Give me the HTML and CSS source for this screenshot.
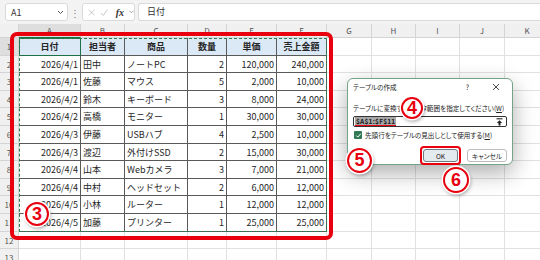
FILE: index.html
```html
<!DOCTYPE html>
<html lang="ja">
<head>
    <meta charset="UTF-8">
    <title>テーブルの作成</title>
    <link rel="stylesheet" href="styles.css">
</head>
<body>
    <div class="screen">
        <div class="formula-bar">
            <div class="name-box">
                <span>A1</span>
                <svg width="7" height="5" viewBox="0 0 7 5"><path d="M1 1l2.5 2.5L6 1" fill="none" stroke="#555" stroke-width="1"/></svg>
            </div>
            <span class="grip">⋮</span>
            <div class="fx-box">
                <svg width="9" height="9" viewBox="0 0 9 9"><path d="M1 1l7 7M8 1L1 8" stroke="#b5b5b5" stroke-width="0.9"/></svg>
                <svg width="10" height="9" viewBox="0 0 10 9"><path d="M1 5l3 3 5-7" fill="none" stroke="#b5b5b5" stroke-width="0.9"/></svg>
                <span class="fx">fx</span>
                <svg width="6" height="4" viewBox="0 0 6 4"><path d="M0.5 0.5l2.5 2.5 2.5-2.5" fill="none" stroke="#777" stroke-width="0.8"/></svg>
            </div>
            <div class="formula">日付</div>
        </div>

        <div class="sheet">
            <div class="corner"></div>
            <div class="ch sel">A</div><div class="ch">B</div><div class="ch">C</div><div class="ch">D</div><div class="ch">E</div><div class="ch">F</div>
            <div class="ch">G</div><div class="ch">H</div><div class="ch">I</div><div class="ch">J</div><div class="ch">K</div>

            <div class="rh sel">1</div>
            <div class="hd active">日付</div><div class="hd">担当者</div><div class="hd">商品</div><div class="hd">数量</div><div class="hd">単価</div><div class="hd">売上金額</div>
            <div></div><div></div><div></div><div></div><div></div>

            <div class="rh">2</div>
            <div class="td num">2026/4/1</div><div class="td">田中</div><div class="td">ノートPC</div><div class="td num">2</div><div class="td num">120,000</div><div class="td num">240,000</div>
            <div></div><div></div><div></div><div></div><div></div>

            <div class="rh">3</div>
            <div class="td num">2026/4/1</div><div class="td">佐藤</div><div class="td">マウス</div><div class="td num">5</div><div class="td num">2,000</div><div class="td num">10,000</div>
            <div></div><div></div><div></div><div></div><div></div>

            <div class="rh">4</div>
            <div class="td num">2026/4/2</div><div class="td">鈴木</div><div class="td">キーボード</div><div class="td num">3</div><div class="td num">8,000</div><div class="td num">24,000</div>
            <div></div><div></div><div></div><div></div><div></div>

            <div class="rh">5</div>
            <div class="td num">2026/4/2</div><div class="td">高橋</div><div class="td">モニター</div><div class="td num">1</div><div class="td num">30,000</div><div class="td num">30,000</div>
            <div></div><div></div><div></div><div></div><div></div>

            <div class="rh">6</div>
            <div class="td num">2026/4/3</div><div class="td">伊藤</div><div class="td">USBハブ</div><div class="td num">4</div><div class="td num">2,500</div><div class="td num">10,000</div>
            <div></div><div></div><div></div><div></div><div></div>

            <div class="rh">7</div>
            <div class="td num">2026/4/3</div><div class="td">渡辺</div><div class="td">外付けSSD</div><div class="td num">2</div><div class="td num">15,000</div><div class="td num">30,000</div>
            <div></div><div></div><div></div><div></div><div></div>

            <div class="rh">8</div>
            <div class="td num">2026/4/4</div><div class="td">山本</div><div class="td">Webカメラ</div><div class="td num">3</div><div class="td num">7,000</div><div class="td num">21,000</div>
            <div></div><div></div><div></div><div></div><div></div>

            <div class="rh">9</div>
            <div class="td num">2026/4/4</div><div class="td">中村</div><div class="td">ヘッドセット</div><div class="td num">2</div><div class="td num">6,000</div><div class="td num">12,000</div>
            <div></div><div></div><div></div><div></div><div></div>

            <div class="rh">10</div>
            <div class="td num">2026/4/5</div><div class="td">小林</div><div class="td">ルーター</div><div class="td num">1</div><div class="td num">12,000</div><div class="td num">12,000</div>
            <div></div><div></div><div></div><div></div><div></div>

            <div class="rh">11</div>
            <div class="td num">2026/4/5</div><div class="td">加藤</div><div class="td">プリンター</div><div class="td num">1</div><div class="td num">25,000</div><div class="td num">25,000</div>
            <div></div><div></div><div></div><div></div><div></div>

            <div class="rh">12</div>
            <div></div><div></div><div></div><div></div><div></div><div></div>
            <div></div><div></div><div></div><div></div><div></div>

            <div class="rh">13</div>
            <div></div><div></div><div></div><div></div><div></div><div></div>
            <div></div><div></div><div></div><div></div><div></div>
        </div>

        <!-- コピー範囲と注釈 -->
        <div class="copy-range"></div>
        <div class="red-frame"></div>

        <div class="dialog">
            <div class="dialog-title">
                <span>テーブルの作成</span>
                <span class="help">?</span>
                <svg class="close" width="8" height="8" viewBox="0 0 8 8"><path d="M1 1l6 6M7 1L1 7" stroke="#333" stroke-width="0.9"/></svg>
            </div>
            <div class="dialog-label">テーブルに変換するデータ範囲を指定してください(<u>W</u>)</div>
            <div class="range-input">
                <span class="range-text">$A$1:$F$11</span>
                <svg width="7" height="8" viewBox="0 0 7 8"><path d="M0.5 0.8h6" stroke="#222" stroke-width="1.1"/><path d="M3.5 2.2L0.8 5h1.7v2.6h2V5h1.7z" fill="#222"/></svg>
            </div>
            <div class="check-row">
                <span class="check">
                    <svg width="7" height="7" viewBox="0 0 7 7"><path d="M1.3 3.6l1.5 1.5 3-3.4" fill="none" stroke="#fff" stroke-width="1"/></svg>
                </span>
                <span>先頭行をテーブルの見出しとして使用する(<u>M</u>)</span>
            </div>
            <div class="buttons">
                <span class="ok-frame"><button class="btn ok">OK</button></span>
                <button class="btn">キャンセル</button>
            </div>
        </div>

        <span class="step s3">3</span>
        <span class="step s4">4</span>
        <span class="step s5">5</span>
        <span class="step s6">6</span>
    </div>
</body>
</html>
```

FILE: styles.css
```css
* {
    box-sizing: border-box;
}

body {
    margin: 0;
    font-family: "Noto Sans CJK JP", "Noto Sans", sans-serif;
    background: #fff;
    color: #262626;
}

.screen {
    position: relative;
    width: 540px;
    height: 260px;
    overflow: hidden;
}

/* 数式バー */
.formula-bar {
    height: 24px;
    display: flex;
    align-items: center;
    padding-left: 5px;
    background: #f3f3f3;
}

.name-box {
    width: 63px;
    height: 18px;
    display: flex;
    align-items: center;
    justify-content: space-between;
    padding: 0 3px 0 5px;
    background: #fff;
    border: 1px solid #dadada;
    border-radius: 3px;
    font-size: 9px;
    color: #333;
}

.grip {
    width: 14px;
    text-align: center;
    font-size: 10px;
    color: #777;
}

.fx-box {
    width: 53px;
    height: 18px;
    display: flex;
    align-items: center;
    gap: 5px;
    padding-left: 5px;
    background: #fff;
    border: 1px solid #dadada;
    border-radius: 3px;
}

.fx {
    font-family: "Liberation Serif", serif;
    font-style: italic;
    font-weight: bold;
    font-size: 10px;
    color: #333;
    margin-left: 2px;
}

.formula {
    flex: 1;
    height: 18px;
    margin-left: 3px;
    padding-left: 8px;
    background: #fff;
    border: 1px solid #dadada;
    border-right: none;
    border-radius: 3px 0 0 3px;
    font-size: 9px;
    line-height: 16px;
    color: #333;
}

/* シート */
.sheet {
    display: grid;
    grid-template-columns: 19px 62px 44px 63px 39px 50px 50px 45px 44px 44px 45px 45px;
    grid-template-rows: 14px repeat(13, 17.6px);
    font-size: 9px;
}

.sheet > div {
    border-right: 1px solid #e1e1e1;
    border-bottom: 1px solid #e1e1e1;
    white-space: nowrap;
    overflow: hidden;
}

.sheet > .corner,
.sheet > .ch,
.sheet > .rh {
    background: #f0f0f0;
    border-color: #d4d4d4;
    color: #555;
    font-size: 8px;
}

.sheet > .ch {
    text-align: center;
    line-height: 13px;
}

.sheet > .rh {
    text-align: center;
    line-height: 17px;
}

.sheet > .sel {
    background: #dedede;
}

.sheet > .ch.sel {
    border-bottom: 1px solid #1e7145;
}

.sheet > .hd,
.sheet > .td {
    border-color: #595959;
    line-height: 17px;
    padding: 0 2px;
}

.sheet > .hd {
    background: #dbe8f6;
    font-weight: bold;
    text-align: center;
}

.sheet > .hd.active {
    outline: 1px solid #1e7145;
    outline-offset: -1px;
}

.sheet > .num {
    text-align: right;
}

.copy-range {
    position: absolute;
    left: 19px;
    top: 38px;
    width: 308px;
    height: 194px;
    border: 1.5px dashed #2e8150;
}

.red-frame {
    position: absolute;
    left: 10px;
    top: 32px;
    width: 323px;
    height: 208px;
    border: 4.5px solid #e8000f;
    border-radius: 7px;
}

/* ダイアログ */
.dialog {
    position: absolute;
    left: 347px;
    top: 78px;
    width: 166px;
    height: 87px;
    padding: 0 5px;
    background: #fff;
    border: 1px solid #74a38a;
    border-radius: 6px;
    box-shadow: 0 8px 22px rgba(0, 0, 0, 0.32);
    font-size: 6.6px;
    font-feature-settings: "palt";
    color: #222;
}

.dialog-title {
    height: 16px;
    display: flex;
    align-items: center;
}

.dialog-title .help {
    margin-left: auto;
    margin-right: 23px;
    font-size: 7px;
}

.dialog-title .close {
    margin-right: 7px;
}

.dialog-label {
    margin-top: 8px;
    height: 11px;
    line-height: 11px;
    white-space: nowrap;
}

.range-input {
    height: 11px;
    margin-top: 2px;
    display: flex;
    align-items: center;
    justify-content: space-between;
    padding: 0 3px 0 1px;
    border: 1px solid #333;
    border-radius: 2px;
}

.range-text {
    background: #a9a9a9;
    color: #1b1b1b;
    line-height: 8px;
    padding: 0 1px;
    border-bottom: 1.5px solid #e8000f;
    font-weight: bold;
    letter-spacing: 0.2px;
}

.check-row {
    height: 12px;
    margin-top: 2px;
    display: flex;
    align-items: center;
    gap: 3px;
    padding-left: 1px;
}

.check {
    width: 8px;
    height: 8px;
    display: flex;
    align-items: center;
    justify-content: center;
    background: #2f7a55;
    border-radius: 1px;
}

.buttons {
    margin-top: 5px;
    display: flex;
    justify-content: flex-end;
    align-items: center;
    gap: 6px;
}

.ok-frame {
    display: flex;
    padding: 1px;
    border: 2.5px solid #e8000f;
    border-radius: 4px;
}

.btn {
    height: 13px;
    min-width: 40px;
    padding: 0 4px;
    background: #fff;
    border: 1px solid #bdbdbd;
    border-radius: 3px;
    font-family: inherit;
    font-size: 6.6px;
    font-feature-settings: "palt";
    color: #222;
}

.btn.ok {
    min-width: 35px;
    background: #e4ebee;
    border-color: #6d7b82;
}

/* 手順番号 */
.step {
    position: absolute;
    width: 24px;
    height: 24px;
    display: flex;
    align-items: center;
    justify-content: center;
    background: #fff;
    border: 2.5px solid #e8000f;
    border-radius: 50%;
    box-shadow: 0 0 0 1.5px #fff, 1px 2px 4px rgba(0, 0, 0, 0.45);
    font-family: "Liberation Sans", sans-serif;
    font-size: 18px;
    font-weight: bold;
    color: #e8000f;
}

.s3 { left: 25px; top: 202px; }
.s4 { left: 401px; top: 97px; width: 22px; height: 22px; }
.s5 { left: 347px; top: 148px; width: 25px; height: 25px; }
.s6 { left: 443px; top: 167px; width: 26px; height: 26px; }
```
